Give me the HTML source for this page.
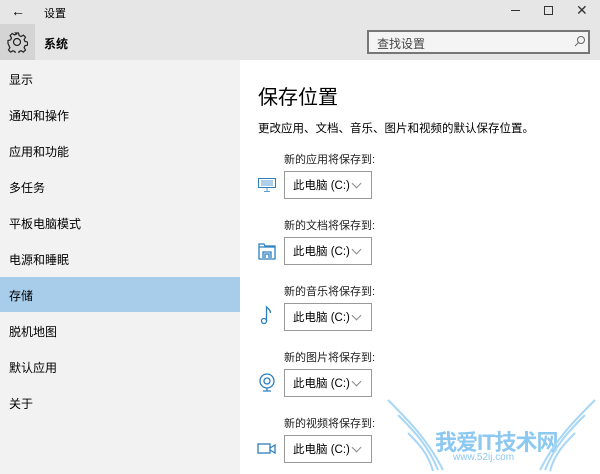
<!DOCTYPE html>
<html><head><meta charset="utf-8"><style>
*{margin:0;padding:0;box-sizing:border-box}
body{width:600px;height:474px;overflow:hidden;background:#fff;font-family:"Liberation Sans","Noto Sans CJK SC",sans-serif;color:#000;position:relative}
.a{position:absolute}
.top{left:0;top:0;width:600px;height:60px;background:#e6e6e6}
.side{left:0;top:60px;width:240px;height:414px;background:#f2f2f2}
.nav{left:9px;font-size:12px}
.sel{left:0;top:277px;width:240px;height:35px;background:#a7cdea}
.lbl{left:284px;font-size:11px;color:#222}
.dd{left:284px;width:88px;height:28px;border:1px solid #999;background:#fff;font-size:11.5px;padding:5px 0 0 8px}
.dd:after{content:"";position:absolute;right:11px;top:8px;width:6px;height:6px;border-right:1px solid #888;border-bottom:1px solid #888;transform:rotate(45deg)}
.ic{left:257px;width:20px;height:20px}
</style></head><body>
<div class="a top"></div>
<div class="a" style="left:0;top:24px;width:35px;height:36px;background:#d4d4d4"></div>
<div class="a" style="left:11px;top:3px;font-size:14px">←</div>
<div class="a" style="left:44px;top:5px;font-size:11px">设置</div>
<svg class="a" style="left:6px;top:31px" width="22" height="22" viewBox="0 0 22 22" fill="none" stroke="#222" stroke-width="1.2"><circle cx="11" cy="11" r="3.5"/><path d="M9.5 2h3l.6 2.6 2 .9 2.3-1.4 2.1 2.1-1.4 2.3.9 2 2.6.6v3l-2.6.6-.9 2 1.4 2.3-2.1 2.1-2.3-1.4-2 .9-.6 2.6h-3l-.6-2.6-2-.9-2.3 1.4-2.1-2.1 1.4-2.3-.9-2L2 12.5v-3l2.6-.6.9-2-1.4-2.3 2.1-2.1 2.3 1.4 2-.9z"/></svg>
<div class="a" style="left:44px;top:35px;font-size:12px;font-weight:bold">系统</div>
<div class="a" style="left:511px;top:10px;width:9px;height:1px;background:#333"></div>
<div class="a" style="left:544px;top:6px;width:9px;height:9px;border:1px solid #333"></div>
<div class="a" style="left:576px;top:2px;font-size:14px;color:#333">✕</div>
<div class="a" style="left:367px;top:30px;width:223px;height:24px;border:2px solid #777;background:#f4f4f4;font-size:12px;color:#444;padding:3px 0 0 8px">查找设置</div>
<svg class="a" style="left:574px;top:35px" width="12" height="12" viewBox="0 0 12 12" fill="none" stroke="#666"><circle cx="7" cy="5" r="3.5"/><path d="M4.5 7.5L1 11"/></svg>
<div class="a side"></div>
<div class="a sel"></div>
<div class="a nav" style="top:71px">显示</div>
<div class="a nav" style="top:107px">通知和操作</div>
<div class="a nav" style="top:143px">应用和功能</div>
<div class="a nav" style="top:179px">多任务</div>
<div class="a nav" style="top:215px">平板电脑模式</div>
<div class="a nav" style="top:251px">电源和睡眠</div>
<div class="a nav" style="top:287px">存储</div>
<div class="a nav" style="top:323px">脱机地图</div>
<div class="a nav" style="top:359px">默认应用</div>
<div class="a nav" style="top:395px">关于</div>
<div class="a" style="left:258px;top:81px;font-size:20px">保存位置</div>
<div class="a" style="left:258px;top:120px;font-size:11.5px">更改应用、文档、音乐、图片和视频的默认保存位置。</div>

<div class="a lbl" style="top:151px">新的应用将保存到:</div>
<div class="a dd" style="top:171px">此电脑 (C:)</div>
<svg class="a ic" style="top:175px" viewBox="0 0 20 20" fill="none" stroke="#2b7fc0"><rect x="1.5" y="3.5" width="17" height="9"/><path d="M4 6h12M4 8h12M4 10h12M10 13v3M7 16.5h6" stroke-width=".8"/></svg>
<div class="a lbl" style="top:217px">新的文档将保存到:</div>
<div class="a dd" style="top:237px">此电脑 (C:)</div>
<svg class="a ic" style="top:241px" viewBox="0 0 20 20" fill="none" stroke="#2b7fc0" stroke-width="1.3"><path d="M2 3h5l1 2h10v13H2z M2 6h16"/><path d="M6 17v-6h8v6M8 17v-4h4v4"/></svg>
<div class="a lbl" style="top:283px">新的音乐将保存到:</div>
<div class="a dd" style="top:303px">此电脑 (C:)</div>
<svg class="a ic" style="top:305px" viewBox="0 0 20 20" fill="none" stroke="#2b7fc0" stroke-width="1.3"><circle cx="7" cy="16" r="2.5"/><path d="M9.5 16V2c2 2 4 3 4 6"/></svg>
<div class="a lbl" style="top:349px">新的图片将保存到:</div>
<div class="a dd" style="top:369px">此电脑 (C:)</div>
<svg class="a ic" style="top:372px" viewBox="0 0 20 20" fill="none" stroke="#2b7fc0" stroke-width="1.3"><circle cx="10" cy="9" r="7"/><circle cx="10" cy="9" r="3"/><path d="M6 19h8M10 16v3"/></svg>
<div class="a lbl" style="top:415px">新的视频将保存到:</div>
<div class="a dd" style="top:435px">此电脑 (C:)</div>
<svg class="a ic" style="top:439px" viewBox="0 0 20 20" fill="none" stroke="#2b7fc0" stroke-width="1.3"><rect x="1" y="5" width="12" height="9"/><path d="M13 9l5-3v8l-5-3"/></svg>

<div class="a" style="left:435px;top:425px;font-size:22px;font-weight:bold;color:#8cc8f0;letter-spacing:-1px">我爱IT技术网</div>
<div class="a" style="left:453px;top:452px;font-size:10px;color:#8cc8f0">www.52ij.com</div>
<svg class="a" style="left:383px;top:395px" width="217" height="79" fill="none" stroke="#a8d6f5" stroke-width="2"><path d="M5 5c20 20 40 40 55 70M15 20c15 15 30 30 40 55M25 38c10 10 20 20 25 38"/><path d="M212 5c-20 20-40 40-55 70M202 20c-15 15-30 30-40 55M192 38c-10 10-20 20-25 38"/></svg>
</body></html>
